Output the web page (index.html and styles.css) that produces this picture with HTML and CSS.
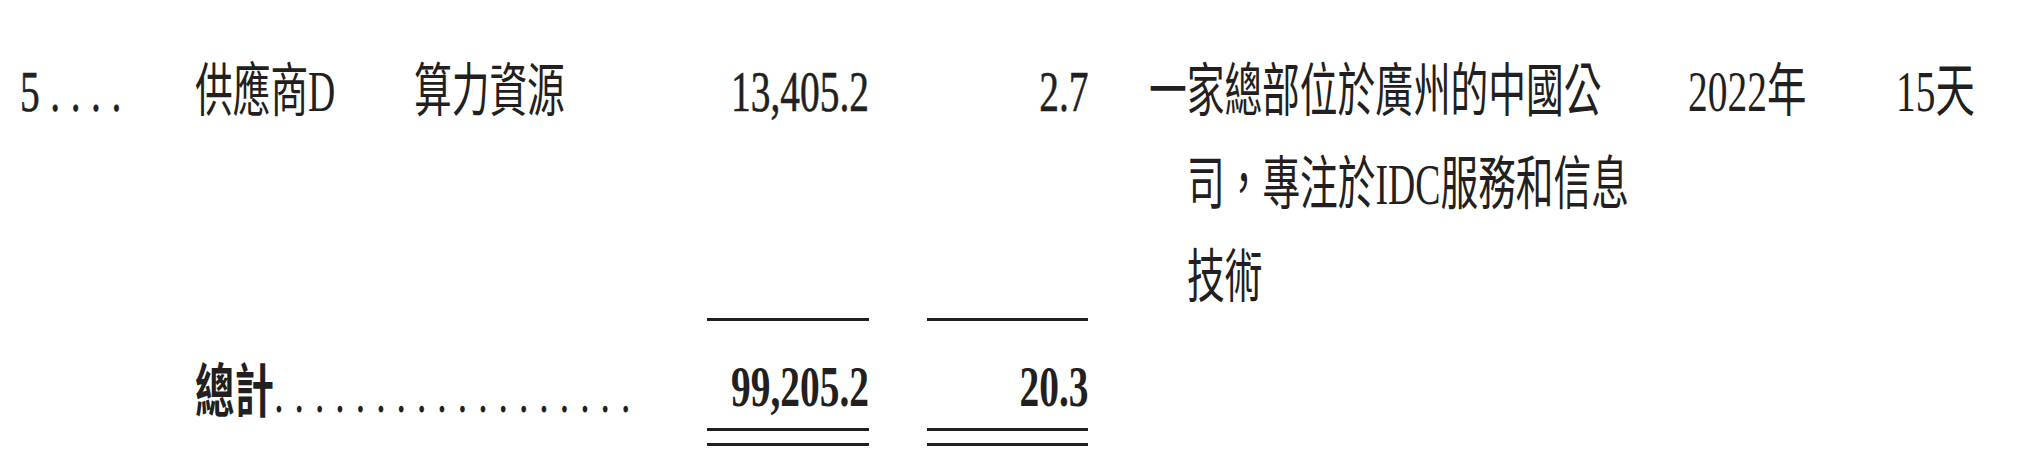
FILE: index.html
```html
<!DOCTYPE html>
<html lang="zh-Hant">
<head>
<meta charset="utf-8">
<title>供應商</title>
<link rel="stylesheet" href="styles.css">
</head>
<body>
<div class="sheet">
  <div class="cell c-no"><span class="sx lat dots">5 . . . .</span></div>
  <div class="cell c-sup"><span class="sx cjk">供應商D</span></div>
  <div class="cell c-type"><span class="sx cjk">算力資源</span></div>
  <div class="cell c-amt num"><span class="sx lat">13,405.2</span></div>
  <div class="cell c-pct num"><span class="sx lat">2.7</span></div>
  <div class="cell c-desc">
    <div class="ln"><span class="sx cjk">一家總部位於廣州的中國公</span></div>
    <div class="ln ind"><span class="sx cjk">司，專注於IDC服務和信息</span></div>
    <div class="ln ind"><span class="sx cjk">技術</span></div>
  </div>
  <div class="cell c-year"><span class="sx">2022年</span></div>
  <div class="cell c-days"><span class="sx">15天</span></div>

  <div class="rule r-amt"></div>
  <div class="rule r-pct"></div>

  <div class="cell t-label"><span class="sx"><span class="t-word">總計</span><span class="dots">. . . . . . . . . . . . . . . . . .</span></span></div>
  <div class="t-amt">
    <div class="t-val num"><span class="sx">99,205.2</span></div>
    <div class="dbl"></div>
  </div>
  <div class="t-pct">
    <div class="t-val num"><span class="sx">20.3</span></div>
    <div class="dbl"></div>
  </div>
</div>
</body>
</html>
```
FILE: styles.css
```css
html, body {
  margin: 0;
  padding: 0;
  background: #ffffff;
  overflow: hidden;
}

.sheet {
  width: 2040px;
  font-family: "Liberation Serif", "Noto Sans CJK TC", serif;
  font-size: 58px;
  line-height: 93px;
  color: #231f20;
  display: grid;
  grid-template-columns: 195px 219px 293px 162px 58px 161px 61px 539px 208px 144px;
  grid-template-rows: 93px 183px 130px;
  padding-top: 45px;
}

.cell {
  display: flex;
  white-space: nowrap;
}

.sx {
  display: inline-block;
  white-space: nowrap;
  transform: scaleX(0.68);
  transform-origin: 0 50%;
}
.sx.cjk {
  transform: scaleX(0.65);
}
.sx.lat {
  -webkit-text-stroke: 0.6px #231f20;
}

.num {
  display: flex;
  justify-content: flex-end;
}
.num .sx {
  transform-origin: 100% 50%;
}

.dots {
  letter-spacing: 0.5px;
}

.c-no { grid-column: 1; grid-row: 1; padding-left: 20px; }
.c-sup { grid-column: 2; grid-row: 1; }
.c-type { grid-column: 3; grid-row: 1; }
.c-amt { grid-column: 4; grid-row: 1; }
.c-pct { grid-column: 6; grid-row: 1; }
.c-year { grid-column: 9; grid-row: 1; }
.c-days { grid-column: 10; grid-row: 1; }

.c-desc {
  grid-column: 8;
  grid-row: 1 / span 2;
  flex-direction: column;
}
.c-desc .ln {
  height: 93px;
}
.c-desc .ind {
  padding-left: 38px;
}

.rule {
  grid-row: 2;
  align-self: end;
  height: 3px;
  background: #231f20;
}
.r-amt { grid-column: 4; }
.r-pct { grid-column: 6; }

.t-label {
  grid-column: 2 / span 2;
  grid-row: 3;
  padding-top: 20px;
}
.t-word {
  font-family: "Noto Sans CJK TC", sans-serif;
  font-weight: 700;
}
.t-amt { grid-column: 4; grid-row: 3; padding-top: 24px; }
.t-pct { grid-column: 6; grid-row: 3; padding-top: 24px; }

.t-val {
  line-height: 83px;
  font-weight: 700;
}
.dbl {
  height: 12px;
  border-top: 3px solid #231f20;
  border-bottom: 3px solid #231f20;
}
```
